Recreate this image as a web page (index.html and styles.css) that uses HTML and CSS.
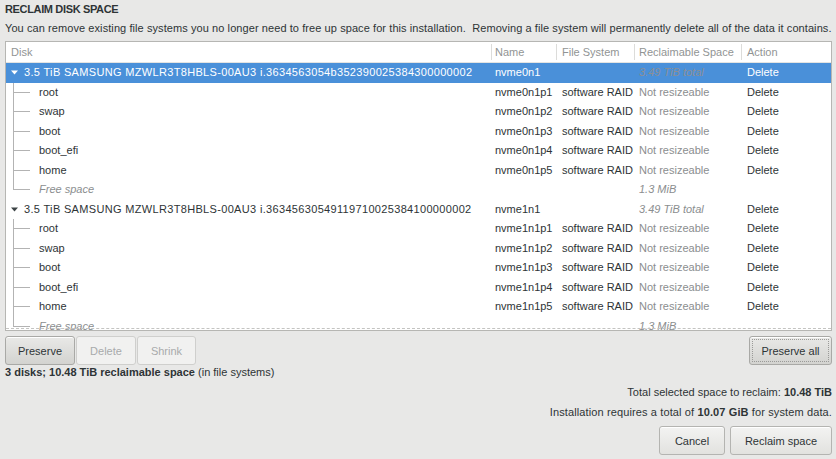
FILE: index.html
```html
<!DOCTYPE html>
<html>
<head>
<meta charset="utf-8">
<link rel="stylesheet" href="styles.css">
</head>
<body>
<div class="page">
  <div class="title">RECLAIM DISK SPACE</div>
  <div class="desc">You can remove existing file systems you no longer need to free up space for this installation.&nbsp; Removing a file system will permanently delete all of the data it contains.</div>

  <div class="table">
    <div class="row head">
      <div class="c c-disk">Disk</div>
      <div class="c c-name sep">Name</div>
      <div class="c c-fs sep">File System</div>
      <div class="c c-rec sep">Reclaimable Space</div>
      <div class="c c-act sep">Action</div>
    </div>

    <div class="row sel">
      <div class="c c-disk"><svg class="exp" width="7" height="5" viewBox="0 0 7 5"><path d="M0 0.5h7L3.5 4.5z" fill="currentColor"/></svg><span class="disk-t">3.5 TiB SAMSUNG MZWLR3T8HBLS-00AU3 i.3634563054b352390025384300000002</span></div>
      <div class="c c-name">nvme0n1</div>
      <div class="c c-fs"></div>
      <div class="c c-rec dim it">3.49 TiB total</div>
      <div class="c c-act">Delete</div>
    </div>
    <div class="row"><div class="c c-disk"><span class="branch"><i class="bt"></i><i class="bb"></i></span><span class="leaf">root</span></div><div class="c c-name">nvme0n1p1</div><div class="c c-fs">software RAID</div><div class="c c-rec dim">Not resizeable</div><div class="c c-act">Delete</div></div>
    <div class="row"><div class="c c-disk"><span class="branch"><i class="bt"></i><i class="bb"></i></span><span class="leaf">swap</span></div><div class="c c-name">nvme0n1p2</div><div class="c c-fs">software RAID</div><div class="c c-rec dim">Not resizeable</div><div class="c c-act">Delete</div></div>
    <div class="row"><div class="c c-disk"><span class="branch"><i class="bt"></i><i class="bb"></i></span><span class="leaf">boot</span></div><div class="c c-name">nvme0n1p3</div><div class="c c-fs">software RAID</div><div class="c c-rec dim">Not resizeable</div><div class="c c-act">Delete</div></div>
    <div class="row"><div class="c c-disk"><span class="branch"><i class="bt"></i><i class="bb"></i></span><span class="leaf">boot_efi</span></div><div class="c c-name">nvme0n1p4</div><div class="c c-fs">software RAID</div><div class="c c-rec dim">Not resizeable</div><div class="c c-act">Delete</div></div>
    <div class="row"><div class="c c-disk"><span class="branch"><i class="bt"></i><i class="bb"></i></span><span class="leaf">home</span></div><div class="c c-name">nvme0n1p5</div><div class="c c-fs">software RAID</div><div class="c c-rec dim">Not resizeable</div><div class="c c-act">Delete</div></div>
    <div class="row"><div class="c c-disk"><span class="branch last"><i class="bt"></i><i class="bb"></i></span><span class="leaf dim it">Free space</span></div><div class="c c-name"></div><div class="c c-fs"></div><div class="c c-rec dim it">1.3 MiB</div><div class="c c-act"></div></div>

    <div class="row">
      <div class="c c-disk"><svg class="exp" width="7" height="5" viewBox="0 0 7 5"><path d="M0 0.5h7L3.5 4.5z" fill="currentColor"/></svg><span class="disk-t">3.5 TiB SAMSUNG MZWLR3T8HBLS-00AU3 i.36345630549119710025384100000002</span></div>
      <div class="c c-name">nvme1n1</div>
      <div class="c c-fs"></div>
      <div class="c c-rec dim it">3.49 TiB total</div>
      <div class="c c-act">Delete</div>
    </div>
    <div class="row"><div class="c c-disk"><span class="branch"><i class="bt"></i><i class="bb"></i></span><span class="leaf">root</span></div><div class="c c-name">nvme1n1p1</div><div class="c c-fs">software RAID</div><div class="c c-rec dim">Not resizeable</div><div class="c c-act">Delete</div></div>
    <div class="row"><div class="c c-disk"><span class="branch"><i class="bt"></i><i class="bb"></i></span><span class="leaf">swap</span></div><div class="c c-name">nvme1n1p2</div><div class="c c-fs">software RAID</div><div class="c c-rec dim">Not resizeable</div><div class="c c-act">Delete</div></div>
    <div class="row"><div class="c c-disk"><span class="branch"><i class="bt"></i><i class="bb"></i></span><span class="leaf">boot</span></div><div class="c c-name">nvme1n1p3</div><div class="c c-fs">software RAID</div><div class="c c-rec dim">Not resizeable</div><div class="c c-act">Delete</div></div>
    <div class="row"><div class="c c-disk"><span class="branch"><i class="bt"></i><i class="bb"></i></span><span class="leaf">boot_efi</span></div><div class="c c-name">nvme1n1p4</div><div class="c c-fs">software RAID</div><div class="c c-rec dim">Not resizeable</div><div class="c c-act">Delete</div></div>
    <div class="row"><div class="c c-disk"><span class="branch"><i class="bt"></i><i class="bb"></i></span><span class="leaf">home</span></div><div class="c c-name">nvme1n1p5</div><div class="c c-fs">software RAID</div><div class="c c-rec dim">Not resizeable</div><div class="c c-act">Delete</div></div>
    <div class="row"><div class="c c-disk"><span class="branch last"><i class="bt"></i><i class="bb"></i></span><span class="leaf dim it">Free space</span></div><div class="c c-name"></div><div class="c c-fs"></div><div class="c c-rec dim it">1.3 MiB</div><div class="c c-act"></div></div>
  </div>

  <div class="btnbar">
    <div class="group">
      <button class="btn pressed b-preserve">Preserve</button>
      <button class="btn off b-delete">Delete</button>
      <button class="btn off b-shrink">Shrink</button>
    </div>
    <button class="btn pressed focus b-all"><span>Preserve all</span></button>
  </div>

  <div class="summary"><b>3 disks; 10.48 TiB reclaimable space</b> (in file systems)</div>

  <div class="right-line first">Total selected space to reclaim: <b>10.48 TiB</b></div>
  <div class="right-line wide">Installation requires a total of <b>10.07 GiB</b> for system data.</div>

  <div class="actions">
    <button class="btn b-cancel">Cancel</button>
    <button class="btn b-reclaim">Reclaim space</button>
  </div>
</div>
</body>
</html>
```

FILE: styles.css
```css
* { box-sizing: border-box; }
html, body { margin: 0; padding: 0; }
body {
  background: #e8e8e7;
  font-family: "Liberation Sans", Arial, sans-serif;
  font-size: 11px;
  color: #2e3436;
  width: 836px;
  height: 459px;
  overflow: hidden;
}
.page {
  padding: 2px 4px 0 5px;
}
.title {
  font-weight: bold;
  font-size: 11px;
  letter-spacing: -0.35px;
  line-height: 14px;
  height: 14px;
}
.desc {
  margin-top: 5px;
  line-height: 14px;
  white-space: nowrap;
  letter-spacing: 0.08px;
}
.table {
  margin-top: 6px;
  height: 290px;
  background: #fff;
  border: 1px solid #b6b6b3;
  overflow: hidden;
  position: relative;
}
.table::after {
  content: "";
  position: absolute;
  left: 0; right: 0; bottom: 1px;
  border-bottom: 1px dashed #c4c4c2;
}
.row {
  display: grid;
  grid-template-columns: 485px 65px 78px 107px 90px;
  height: 19.5px;
  line-height: 19.5px;
  white-space: nowrap;
}
.row.head {
  height: 21px;
  line-height: 20px;
  border-bottom: 1px solid #e4e4e2;
  color: #919494;
}
.row.head .c-disk { padding-left: 5px; }
.row.head .sep { border-left: 1px solid #dcdcda; margin: 2px 0 2px; line-height: 16px; }
.row.head .c-name { padding-left: 3px; }
.row.head .c-fs { padding-left: 5px; }
.row.head .c-rec { padding-left: 4px; }
.row.head .c-act { padding-left: 5px; }
.c { overflow: hidden; }
.c-disk { display: flex; align-items: stretch; }
.c-name { padding-left: 4px; }
.c-fs { padding-left: 6px; }
.c-rec { padding-left: 5px; }
.c-act { padding-left: 6px; }
.row.sel { background: #4a90d9; color: #fff; }
.row.sel .dim { color: #8c8f94; }
.dim { color: #8b8e8f; }
.it { font-style: italic; }
.exp { margin: 7px 0 0 5px; flex: none; color: #3d4446; }
.row.sel .exp { color: #fff; }
.disk-t { margin-left: 6px; letter-spacing: 0.33px; }
.branch {
  width: 17px;
  margin-left: 7px;
  display: flex;
  flex-direction: column;
  flex: none;
}
.branch i { display: block; flex: 1; border-left: 1px solid #b3b3b3; }
.branch .bt { border-bottom: 1px solid #b3b3b3; }
.branch.last .bb { border-left: none; }
.leaf { margin-left: 9px; }
.btnbar {
  margin-top: 5px;
  display: flex;
  justify-content: space-between;
}
.group { display: flex; gap: 1px; }
.btn {
  font-family: inherit;
  font-size: 11px;
  color: #2e3436;
  height: 29px;
  padding: 0;
  border: 1px solid #b4b4b1;
  border-radius: 3px;
  background: linear-gradient(#f3f3f2, #e2e2df);
  box-shadow: inset 0 1px #fff;
}
.btn.pressed {
  background: linear-gradient(#e9e9e7, #d3d3d0);
  border-color: #a9a9a6;
}
.btn.off {
  background: #f1f1f0;
  border-color: #cfcfcd;
  color: #a8aaab;
  box-shadow: none;
}
.b-preserve { width: 70px; }
.b-delete { width: 60px; }
.b-shrink { width: 59px; }
.b-all { width: 83px; }
.btn.focus span {
  display: flex;
  align-items: center;
  justify-content: center;
  margin: 3px;
  height: 21px;
  outline: 1px dotted #9a9a98;
}
.summary {
  line-height: 14px;
}
.right-line {
  text-align: right;
  line-height: 14px;
  margin-top: 6px;
}
.right-line.wide { letter-spacing: 0.12px; }
.actions {
  margin-top: 7px;
  display: flex;
  justify-content: flex-end;
  gap: 5px;
}
.b-cancel { width: 66px; }
.b-reclaim { width: 102px; }
```
